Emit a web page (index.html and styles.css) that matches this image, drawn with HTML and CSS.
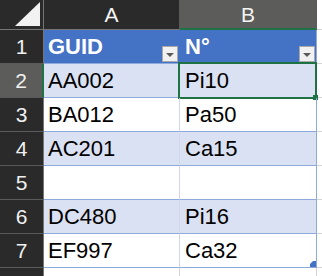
FILE: index.html
```html
<!DOCTYPE html>
<html lang="en">
<head>
    <meta charset="UTF-8">
    <title>Sheet</title>
    <link rel="stylesheet" href="styles.css">
</head>
<body>
    <div class="sheet">
        <!-- column headers -->
        <div class="corner">
            <svg width="44" height="30" viewBox="0 0 44 30"><polygon points="15,26 40,2 40,26" fill="#f2f2f2"/></svg>
        </div>
        <div class="col-head">A</div>
        <div class="col-head active">B</div>
        <div class="col-head spare"></div>

        <!-- row 1: table header -->
        <div class="row-head">1</div>
        <div class="cell th">GUID<span class="drop"></span></div>
        <div class="cell th last">N°<span class="drop"></span></div>
        <div class="spare"></div>

        <div class="row-head active">2</div>
        <div class="cell band">AA002</div>
        <div class="cell band last selected">Pi10
            <div class="selection"><span class="handle"></span></div>
        </div>
        <div class="spare"></div>

        <div class="row-head">3</div>
        <div class="cell">BA012</div>
        <div class="cell last">Pa50</div>
        <div class="spare"></div>

        <div class="row-head">4</div>
        <div class="cell band">AC201</div>
        <div class="cell band last">Ca15</div>
        <div class="spare"></div>

        <div class="row-head">5</div>
        <div class="cell"></div>
        <div class="cell last"></div>
        <div class="spare"></div>

        <div class="row-head">6</div>
        <div class="cell band">DC480</div>
        <div class="cell band last">Pi16</div>
        <div class="spare"></div>

        <div class="row-head">7</div>
        <div class="cell">EF997</div>
        <div class="cell last end">Ca32
            <svg class="resize" width="6" height="6" viewBox="0 0 6 6"><polygon points="3,0 6,0 6,6 0,6 0,3" fill="#4472c4"/></svg>
        </div>
        <div class="spare"></div>

        <!-- row 8 is cut by the window edge -->
        <div class="row-head"></div>
        <div class="blank"></div>
        <div class="blank"></div>
        <div class="spare"></div>
    </div>
</body>
</html>
```

FILE: styles.css
```css
body {
    margin: 0;
    background-color: #ffffff;
    overflow: hidden;
    font-family: "Liberation Sans", Arial, sans-serif;
}

.sheet {
    display: grid;
    grid-template-columns: 44px 136px 137px 1fr;
    grid-template-rows: 30px repeat(8, 34px);
    width: 322px;
}

.sheet > div {
    box-sizing: border-box;
}

/* Headers */
.corner {
    background-color: #2a2a2a;
    border-right: 1px solid #767676;
    border-bottom: 1px solid #767676;
}

.corner svg {
    display: block;
}

.col-head {
    background-color: #2a2a2a;
    color: #f4f4f4;
    font-size: 21px;
    line-height: 29px;
    text-align: center;
    border-right: 1px solid #5a5a5a;
    border-bottom: 1px solid #767676;
}

.col-head.active {
    background-color: #5c5d5a;
    border-bottom: 2px solid #1f7244;
}

.col-head.spare {
    border-right: none;
}

.row-head {
    background-color: #2a2a2a;
    color: #f0f0f0;
    font-size: 21px;
    line-height: 30px;
    padding-top: 2px;
    text-align: center;
    border-right: 1px solid #767676;
    border-bottom: 1px solid #5a5a5a;
}

.row-head.active {
    background-color: #5c5d5a;
    border-right: 2px solid #1f7244;
}

/* Cells */
.cell {
    position: relative;
    display: flex;
    color: #000;
    font-size: 22px;
    line-height: 30px;
    padding: 2px 0 0 4px;
    border-right: 1px solid #d0d7e6;
    border-bottom: 1px solid #8ea9db;
}

.cell.last {
    padding-left: 5px;
    border-right: 1px solid #8ea9db;
}

.band {
    background-color: #d9e1f2;
}

.th {
    background-color: #4472c4;
    color: #fff;
    font-weight: bold;
    border-right-color: #4472c4;
}

.drop {
    box-sizing: border-box;
    width: 16px;
    height: 16px;
    margin: auto 1px 1px auto;
    background-color: #f1f1f1;
    border: 1px solid #a9a9a9;
    display: flex;
    justify-content: center;
    align-items: center;
}

.drop::after {
    content: "";
    border-left: 4px solid transparent;
    border-right: 4px solid transparent;
    border-top: 4px solid #5a5a5a;
    margin-top: 1px;
}

.selection {
    position: absolute;
    left: -2px;
    top: -2px;
    width: 139px;
    height: 37px;
    box-sizing: border-box;
    border: 2px solid #1f7244;
}

.handle {
    position: absolute;
    left: 133px;
    top: 31px;
    width: 5px;
    height: 5px;
    background-color: #1f7244;
}

.resize {
    position: absolute;
    right: 0;
    bottom: 0;
}

.blank {
    border-right: 1px solid #d4d4d4;
}

.spare {
    background-color: #fff;
    border-bottom: 1px solid #d4d4d4;
}
```
